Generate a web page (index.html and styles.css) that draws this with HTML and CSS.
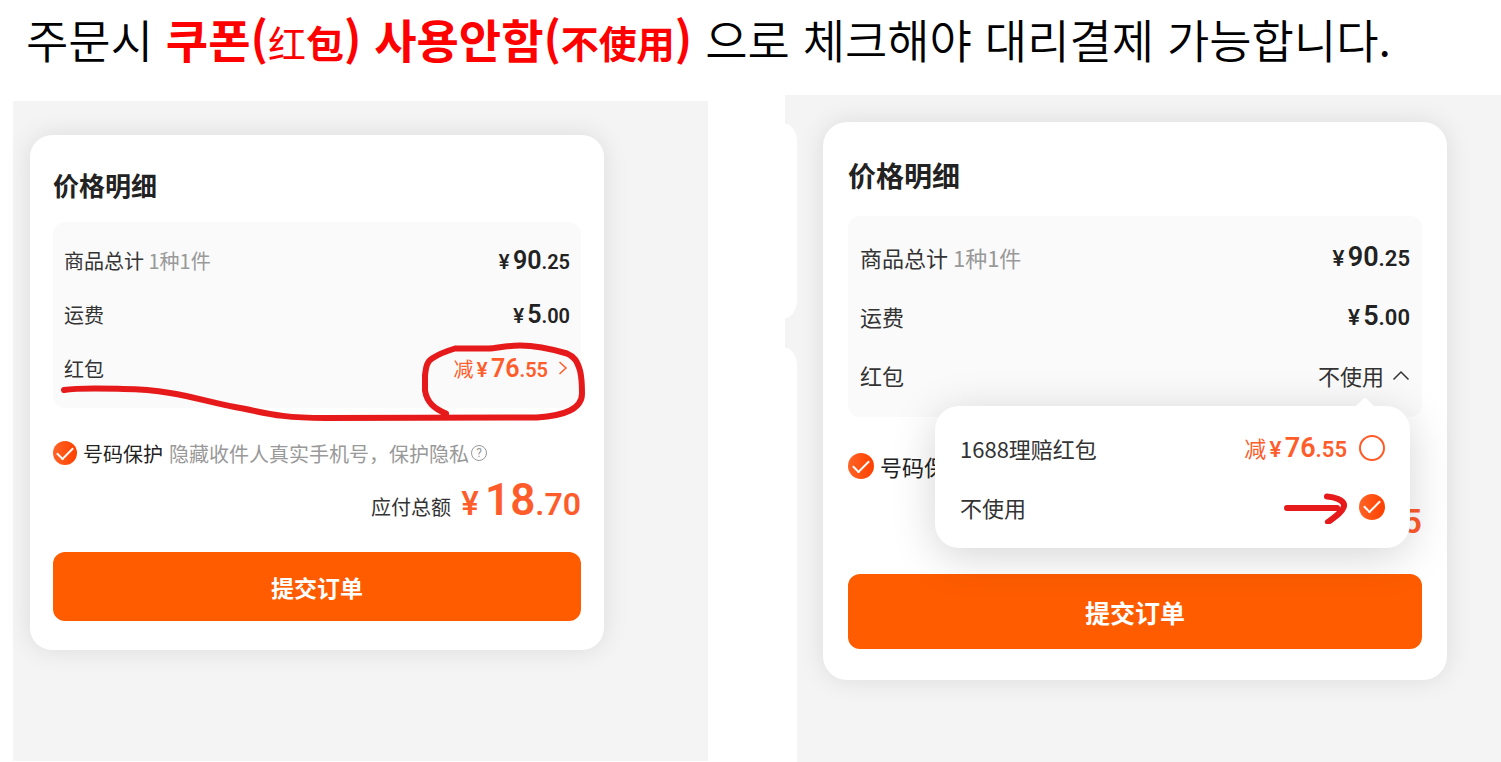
FILE: index.html
```html
<!DOCTYPE html>
<html lang="ko">
<head>
  <meta charset="UTF-8">
  <meta name="viewport" content="width=device-width, initial-scale=1.0">
  <title>주문시 쿠폰 사용안함</title>
  <link rel="stylesheet" href="styles.css">
</head>
<body>
  <h1 class="notice">주문시 <strong>쿠폰(<span class="hanzi"><span class="thin">红</span>包</span>) 사용안함(<span class="hanzi">不使用</span>)</strong> 으로 체크해야 대리결제 가능합니다.</h1>

  <main class="steps" lang="zh-CN">
    <section class="panel">
      <div class="card">
        <h2>价格明细</h2>
        <div class="details">
          <div class="row">
            <span>商品总计 <span class="muted">1种1件</span></span>
            <span class="price"><span class="yen">¥</span><b>90</b>.25</span>
          </div>
          <div class="row">
            <span>运费</span>
            <span class="price"><span class="yen">¥</span><b>5</b>.00</span>
          </div>
          <div class="row">
            <span>红包</span>
            <button type="button" class="picker orange">
              减<span class="price"><span class="yen">¥</span><b>76</b>.55</span>
              <svg class="chevron" viewBox="0 0 10 14"><path d="M1.5 1l6.500 6-6.500 6"/></svg>
            </button>
          </div>
        </div>
        <div class="protect">
          <input type="checkbox" id="protect-1" class="check" checked>
          <label for="protect-1">号码保护</label>
          <span class="muted">隐藏收件人真实手机号，保护隐私</span>
          <button type="button" class="help">?</button>
        </div>
        <div class="total">
          <span>应付总额</span>
          <span class="price orange"><span class="yen">¥</span><b>18</b>.70</span>
        </div>
        <button type="button" class="submit">提交订单</button>

        <!-- hand drawn underline and circle -->
        <svg class="marker" viewBox="30 135 574 514">
          <path d="M64 389.500C80 387 105 388 123 388.500C178 389 205 402 243 408C275 415 290 417.500 325 417.500C360 417 400 417 537 417C552 416 562 414 570 410C580 405 582 399 582 393C582 385 582 378 580 370C577 360 574 356 567 353C550 348 535 345 520 345C505 345 497 348 488 348H455C445 351 438 354 432 358C427 361 426 366 425 375V390C427 402 434 408 446 413"/>
        </svg>
      </div>
    </section>

    <section class="panel panel-large">
      <div class="neighbours">
        <div class="neighbour"></div>
        <div class="neighbour"></div>
      </div>
      <div class="card">
        <h2>价格明细</h2>
        <div class="details">
          <div class="row">
            <span>商品总计 <span class="muted">1种1件</span></span>
            <span class="price"><span class="yen">¥</span><b>90</b>.25</span>
          </div>
          <div class="row">
            <span>运费</span>
            <span class="price"><span class="yen">¥</span><b>5</b>.00</span>
          </div>
          <div class="row">
            <span>红包</span>
            <button type="button" class="picker">
              不使用
              <svg class="chevron-up" viewBox="0 0 18 12"><path d="M1.500 10.500L9 3l7.500 7.500"/></svg>
            </button>
            <div class="popup">
              <div class="option">
                <label for="coupon-1688">1688理赔红包</label>
                <span class="orange coupon">减<span class="price"><span class="yen">¥</span><b>76</b>.55</span></span>
                <input type="radio" name="coupon" id="coupon-1688" class="check">
              </div>
              <div class="option">
                <label for="coupon-none">不使用</label>
                <svg class="arrow" viewBox="0 0 64 34"><path d="M4 18h50M44 6.500C52 7 60 10 61 14.500C62 20 52 27 45 32"/></svg>
                <input type="radio" name="coupon" id="coupon-none" class="check" checked>
              </div>
            </div>
          </div>
        </div>
        <div class="protect">
          <input type="checkbox" id="protect-2" class="check" checked>
          <label for="protect-2">号码保护</label>
        </div>
        <div class="total">
          <span class="price orange"><span class="yen">¥</span><b>95</b>.25</span>
        </div>
        <button type="button" class="submit">提交订单</button>
      </div>
    </section>
  </main>
</body>
</html>
```
FILE: styles.css
```css
* {
  box-sizing: border-box;
}

body {
  margin: 0;
  background: #fff;
  color: #333;
  font-family: "Noto Sans CJK SC", sans-serif;
}

button {
  border: none;
  background: none;
  padding: 0;
  color: inherit;
  font: inherit;
  cursor: pointer;
}

.notice {
  margin: 0;
  padding: 8px 26px 27px;
  color: #000;
  font-family: "Noto Sans CJK KR", sans-serif;
  font-size: 46px;
  font-weight: 350;
  line-height: 60px;
}

.notice strong {
  color: #f00;
  font-weight: 700;
}

.hanzi {
  font-family: "Noto Sans CJK SC", sans-serif;
  font-size: 38px;
  line-height: 1;
}

.thin {
  font-weight: 400;
}

.steps {
  display: grid;
  grid-template-columns: 695fr 716fr;
  gap: 77px;
  align-items: start;
  padding-left: 13px;
}

.panel {
  margin-top: 6px;
  padding: 34px 104px 111px 17px;
  background: #f4f4f4;
}

.card {
  position: relative;
  padding: 30px 23px 29px;
  border-radius: 22px;
  background: #fff;
  box-shadow: 0 0 26px rgba(0, 0, 0, 0.1);
  font-size: 20px;
}

.card h2 {
  margin: 0 0 17px;
  color: #222;
  font-size: 26px;
  font-weight: 700;
  line-height: 40px;
}

.details {
  padding: 11px 11px 13px;
  border-radius: 12px;
  background: #fafafa;
}

.row {
  position: relative;
  display: flex;
  justify-content: space-between;
  align-items: center;
  height: 54px;
}

.muted {
  color: #999;
}

.price {
  color: #222;
  font-family: Roboto, sans-serif;
  font-size: 20px;
  font-weight: 600;
}

.price b {
  font-size: 25px;
  font-weight: 600;
}

.yen {
  margin-right: 3px;
  font-family: Inter, sans-serif;
}

.orange,
.orange .price {
  color: #ff5c2b;
}

.picker {
  display: flex;
  align-items: center;
}

.picker .price,
.coupon .price {
  margin-left: 3px;
}

.chevron {
  width: 10px;
  height: 14px;
  margin: 0 2px 0 10px;
}

.chevron-up {
  width: 18px;
  height: 12px;
  margin-left: 8px;
}

.chevron path,
.chevron-up path {
  fill: none;
  stroke: currentColor;
  stroke-width: 1.5;
}

.protect {
  display: flex;
  align-items: center;
  gap: 6px;
  height: 32px;
  margin-top: 29px;
}

.protect label {
  color: #222;
}

.check {
  appearance: none;
  display: flex;
  justify-content: center;
  align-items: center;
  flex: none;
  width: 24px;
  height: 24px;
  margin: 0;
  border: 2px solid #ff5a26;
  border-radius: 50%;
}

.check:checked {
  border: none;
  background: linear-gradient(90deg, #ff6427, #ff4000);
}

.check:checked::after {
  content: "";
  width: 14px;
  height: 7px;
  margin-bottom: 4px;
  border: solid #fff;
  border-width: 0 0 2px 2px;
  transform: rotate(-45deg);
}

.help {
  width: 16px;
  height: 16px;
  margin-left: -4px;
  border: 1px solid #999;
  border-radius: 50%;
  color: #999;
  font-family: Roboto, sans-serif;
  font-size: 12px;
  line-height: 14px;
}

.total {
  display: flex;
  justify-content: flex-end;
  align-items: baseline;
  gap: 10px;
  height: 60px;
  margin: 1px 0 22px;
  line-height: 60px;
}

.total .price {
  font-size: 32px;
}

.total .price b {
  font-size: 44px;
}

.total .yen {
  margin-right: 6px;
}

.submit {
  display: block;
  width: 100%;
  height: 69px;
  border-radius: 12px;
  background: #ff5c00;
  color: #fff;
  font-size: 23px;
  font-weight: 700;
}

.marker {
  position: absolute;
  top: 0;
  left: 0;
  width: 100%;
  height: 100%;
  pointer-events: none;
}

.marker path,
.arrow path {
  fill: none;
  stroke: #e61a1a;
  stroke-width: 6;
  stroke-linecap: round;
  stroke-linejoin: round;
}

/* second step, same card at a larger scale */
.panel-large {
  display: flex;
  gap: 26px;
  margin-top: 0;
  padding: 0 54px 0 0;
}

.neighbours {
  display: flex;
  flex-direction: column;
  gap: 30px;
  width: 12px;
  padding-top: 29px;
}

.neighbour {
  height: 194px;
  border-radius: 0 12px 12px 0 / 0 18px 18px 0;
  background: #fff;
}

.neighbour:last-child {
  flex: 1;
  border-bottom-right-radius: 0;
}

.panel-large .card {
  flex: 1;
  margin: 27px 0 82px;
  padding: 33px 25px 31px;
  border-radius: 24px;
  font-size: 22px;
}

.panel-large h2 {
  margin-bottom: 21px;
  font-size: 28px;
}

.panel-large .details {
  padding: 11px 12px 13px;
}

.panel-large .row {
  height: 59px;
}

.panel-large .price {
  font-size: 22px;
}

.panel-large .price b {
  font-size: 27px;
}

.panel-large .check {
  width: 26px;
  height: 26px;
}

.panel-large .protect {
  height: 34px;
  margin-top: 32px;
}

.panel-large .total {
  margin: 4px 0 27px;
}

.panel-large .total .price {
  font-size: 34px;
}

.panel-large .total .price b {
  font-size: 46px;
}

.panel-large .submit {
  height: 75px;
  font-size: 25px;
}

.popup {
  position: absolute;
  z-index: 1;
  top: 61px;
  right: 0;
  width: 475px;
  padding: 12px 25px;
  border-radius: 24px;
  background: #fff;
  box-shadow: 0 8px 44px rgba(0, 0, 0, 0.17);
}

.popup::before {
  content: "";
  position: absolute;
  top: -6px;
  right: 38px;
  width: 14px;
  height: 14px;
  border-radius: 2px;
  background: #fff;
  transform: rotate(45deg);
}

.option {
  display: flex;
  align-items: center;
  gap: 12px;
  height: 59px;
}

.option label {
  flex: 1;
}

.arrow {
  width: 64px;
  height: 34px;
}
```
